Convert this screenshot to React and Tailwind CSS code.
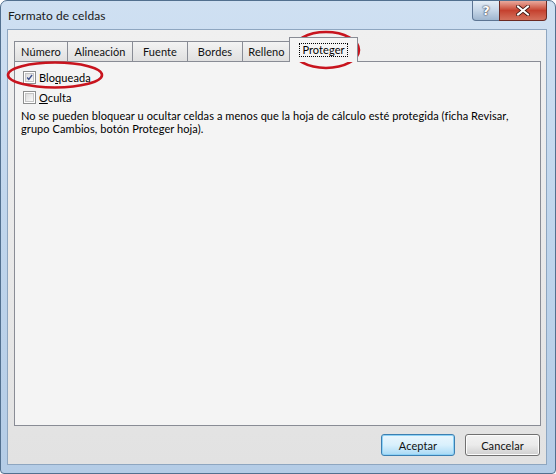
import React from 'react';

const tabs = [
  { label: 'Número', w: 'w-[54px]' },
  { label: 'Alineación', w: 'w-[66px]' },
  { label: 'Fuente', w: 'w-[56px]' },
  { label: 'Bordes', w: 'w-[56px]' },
  { label: 'Relleno', w: 'w-[49px]' },
];

function Check({ checked }) {
  return (
    <div className="w-[13px] h-[13px] border border-[#8e8f8f] bg-white p-[1px] shrink-0">
      <div className="w-full h-full border border-[#c4c4c4] bg-gradient-to-br from-[#dcdcdc] to-[#fafafa] relative">
        {checked && (
          <svg viewBox="0 0 9 9" className="absolute inset-0 w-full h-full">
            <path d="M1.5 4.5 L3.6 7 L7.8 1.3" fill="none" stroke="#3b4f8c" strokeWidth="1.7" />
          </svg>
        )}
      </div>
    </div>
  );
}

export default function App() {
  return (
    <div className="relative w-[556px] h-[474px] bg-white font-['Lato','Liberation_Sans',sans-serif] text-[11px] tracking-[0.08px] text-black leading-[13px]">
      <div className="h-full rounded-t-[7px] rounded-b-[4px] border border-[#52708f] bg-gradient-to-b from-[#cfe0f2] via-[#bfd5ec] to-[#b4cce6] flex flex-col">
        {/* title bar */}
        <div className="h-[28px] flex items-start">
          <span className="ml-[7px] mt-[8px] text-[12px] text-[#1a1a1a]">Formato de celdas</span>
          <div className="ml-auto mr-[8px] flex">
            <div className="w-[28px] h-[20px] border border-t-0 border-[#5d7593] rounded-bl-[4px] bg-gradient-to-b from-[#e4edf6] via-[#c6d6e7] to-[#9fb6cf] flex items-center justify-center">
              <span className="font-['DejaVu_Sans',sans-serif] font-bold text-[13px] text-white [text-shadow:0_0_2px_#334,0_0_1px_#223]">?</span>
            </div>
            <div className="w-[48px] h-[20px] -ml-px border border-t-0 border-[#6b2a22] rounded-br-[4px] bg-gradient-to-b from-[#e9a99d] via-[#c5412f] to-[#d4705c] flex items-center justify-center">
              <svg viewBox="0 0 14 11" className="w-[14px] h-[11px]">
                <path d="M2 1.5 L12 9.5 M12 1.5 L2 9.5" stroke="#3a1410" strokeWidth="3.6" strokeLinecap="square" />
                <path d="M2 1.5 L12 9.5 M12 1.5 L2 9.5" stroke="#ffffff" strokeWidth="2" strokeLinecap="square" />
              </svg>
            </div>
          </div>
        </div>

        {/* client area */}
        <div className="flex-1 ml-[6px] mr-[8px] mb-[8px] border border-[#8ea6c0] bg-gradient-to-b from-[#f0f0f0] to-[#e2e2e2] flex flex-col pl-[6px] pr-[5px] pt-[7px]">
          <div className="h-[24px] flex items-end">
            {tabs.map((t, i) => (
              <div
                key={t.label}
                className={`${t.w} ${i > 0 ? '-ml-px' : ''} h-[20px] border border-b-0 border-[#898c95] bg-gradient-to-b from-[#f3f3f3] to-[#e0e0e0] flex items-center justify-center text-[#111]`}
              >
                {t.label}
              </div>
            ))}
            <div className="relative z-10 -ml-[2px] -mb-px w-[69px] h-[25px] border border-b-0 border-[#898c95] bg-[#f4f4f4] flex items-start justify-center pt-[5px]">
              <span className="border border-dotted border-black px-[2px] leading-[12px]">Proteger</span>
            </div>
          </div>

          <div className="h-[365px] border border-[#898c95] bg-[#f4f4f4] pl-[8px] pt-[9px] pr-[20px]">
            <div className="flex items-center gap-[3px] h-[13px]">
              <Check checked />
              <span>Blo<u>q</u>ueada</span>
            </div>
            <div className="flex items-center gap-[3px] h-[13px] mt-[7px]">
              <Check />
              <span><u>O</u>culta</span>
            </div>
            <p className="mt-[5px] -ml-[2px]">
              No se pueden bloquear u ocultar celdas a menos que la hoja de cálculo esté protegida (ficha Revisar, grupo Cambios, botón Proteger hoja).
            </p>
          </div>

          <div className="flex justify-end gap-[10px] mt-[8px] pr-[1px]">
            <button className="w-[74px] h-[22px] rounded-[3px] border border-[#3c7fb1] bg-gradient-to-b from-[#eaf6fd] via-[#d9f0fc] to-[#a7d9f5] shadow-[inset_0_0_0_1px_#8ed2f6] text-[#111]">
              Aceptar
            </button>
            <button className="w-[75px] h-[22px] rounded-[3px] border border-[#707070] bg-gradient-to-b from-[#f2f2f2] via-[#ebebeb] to-[#cfcfcf] shadow-[inset_0_0_0_1px_#fcfcfc] text-[#111]">
              Cancelar
            </button>
          </div>
        </div>
      </div>

      <svg className="absolute inset-0 pointer-events-none" width="556" height="474">
        <ellipse cx="55" cy="75" rx="47" ry="12.5" fill="none" stroke="#c8141e" strokeWidth="2.6" />
        <ellipse cx="326" cy="50" rx="33" ry="18" fill="none" stroke="#c8141e" strokeWidth="2.6" />
      </svg>
    </div>
  );
}
